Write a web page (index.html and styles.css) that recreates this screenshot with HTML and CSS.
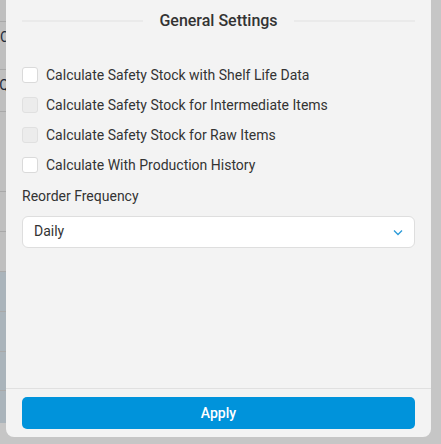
FILE: index.html
```html
<!DOCTYPE html>
<html>
<head>
<meta charset="utf-8">
<link rel="stylesheet" href="styles.css">
</head>
<body>
<div class="under">
  <div class="urow h22"></div>
  <div class="urow h48"><span class="ucell">C</span></div>
  <div class="urow h42"><span class="ucell">Q</span></div>
  <div class="urow h80"></div>
  <div class="urow h40"></div>
  <div class="urow h40"></div>
  <div class="urow blue h40"></div>
  <div class="urow blue h40"></div>
  <div class="urow blue h39"></div>
  <div class="urow blue h32 last"></div>
</div>
<div class="panel">
  <div class="body">
    <div class="title"><span class="tline"></span><span class="ttext">General Settings</span><span class="tline"></span></div>
    <div class="checks">
      <label class="check"><span class="box"></span>Calculate Safety Stock with Shelf Life Data</label>
      <label class="check"><span class="box disabled"></span>Calculate Safety Stock for Intermediate Items</label>
      <label class="check"><span class="box disabled"></span>Calculate Safety Stock for Raw Items</label>
      <label class="check"><span class="box"></span>Calculate With Production History</label>
    </div>
    <div class="field-label">Reorder Frequency</div>
    <div class="select"><span>Daily</span>
      <svg width="10" height="7" viewBox="0 0 10 7"><path d="M1 1.5 L5 5.5 L9 1.5" fill="none" stroke="#2a9ad8" stroke-width="1.3"/></svg>
    </div>
  </div>
  <div class="footer"><button class="apply">Apply</button></div>
</div>
</body>
</html>
```
FILE: styles.css
```css
html, body { margin: 0; padding: 0; }
body {
  width: 441px; height: 444px; overflow: hidden;
  background: #c6c6c6;
  font-family: Roboto, "Liberation Sans", sans-serif;
  position: relative;
}
.under { display: flex; flex-direction: column; width: 6px; }
.urow { box-sizing: border-box; border-bottom: 1px solid #a9a9a9; background: #bfbfbf; font-size: 14px; color: #1e2a3a; position: relative; }
.ucell { position: absolute; right: -3px; top: 7px; }
.h22 { height: 22px; }
.h48 { height: 48px; }
.h42 { height: 42px; }
.h80 { height: 80px; }
.h40 { height: 40px; }
.h39 { height: 39px; }
.h32 { height: 32px; }
.blue { background: #aab4bb; }
.last { border-bottom: none; }
.panel {
  position: absolute; left: 6px; top: 0; width: 425px; height: 437px;
  background: #f3f3f3; border-radius: 0 0 8px 8px;
  display: flex; flex-direction: column;
}
.body { flex: 1; padding: 0 16px; }
.title { display: flex; align-items: center; height: 40px; gap: 16px; }
.tline { flex: 1; height: 2px; background: #eaeaea; margin-top: 2px; }
.ttext { font-size: 16px; font-weight: 500; color: #333; }
.checks { display: flex; flex-direction: column; gap: 14px; margin-top: 27px; }
.check { display: flex; align-items: center; gap: 8px; font-size: 14px; color: #333; height: 16px; line-height: 16px; }
.box { width: 14px; height: 14px; border: 1px solid #dadada; border-radius: 3px; background: #fff; flex: none; }
.box.disabled { background: #ececec; border-color: #e0e0e0; }
.field-label { font-size: 14px; color: #333; margin-top: 15px; line-height: 16px; }
.select {
  margin-top: 12px; height: 30px; background: #fff; border: 1px solid #dedede; border-radius: 6px;
  display: flex; align-items: center; justify-content: space-between; padding: 0 11px 0 11px;
  font-size: 14px; color: #333;
}
.select span { margin-top: -2px; }
.footer { border-top: 1px solid #e0e0e0; padding: 8px 16px 8px; }
.apply {
  width: 100%; height: 32px; border: none; border-radius: 5px; background: #0093db;
  color: #fff; font-family: Roboto, "Liberation Sans", sans-serif; font-size: 14px; font-weight: 500;
}
```
